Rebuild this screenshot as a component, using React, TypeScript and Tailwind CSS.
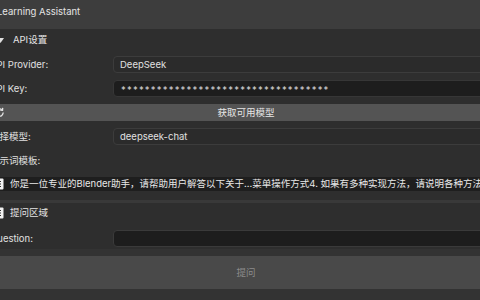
import React from "react";

const font = { fontFamily: 'Inter, "Noto Sans CJK SC", sans-serif' };

function DocIcon() {
  return (
    <svg width="11" height="12" viewBox="0 0 11 12" className="shrink-0">
      <rect x="0.5" y="0.5" width="10" height="11" rx="1" fill="#f2f2f2" />
      <rect x="2" y="3" width="6" height="1" fill="#2a2a2a" />
      <rect x="2" y="5.5" width="6" height="1" fill="#2a2a2a" />
      <rect x="2" y="8" width="6" height="1" fill="#2a2a2a" />
    </svg>
  );
}

function Row({ label, children }: { label: string; children: React.ReactNode }) {
  return (
    <div className="flex h-[17px] items-center">
      <div className="w-[123px] shrink-0 text-[#e0e0e0] whitespace-nowrap">{label}</div>
      {children}
    </div>
  );
}

export default function App() {
  return (
    <div
      className="w-[480px] h-[300px] overflow-hidden bg-[#2e2e2e] text-[9.5px] leading-[12px]"
      style={font}
    >
      <div className="-ml-[20px] w-[532px] flex flex-col">
        {/* Panel header */}
        <div className="h-[29px] bg-[#3d3d3d] pl-[17px] pt-[6px] text-[#e4e4e4] whitespace-nowrap">
          Learning Assistant
        </div>

        {/* Sub panel: API设置 */}
        <div className="flex h-[22px] items-center pl-[17px] text-[#e4e4e4]">
          <svg width="7" height="5" viewBox="0 0 7 5" className="mr-[9px]">
            <path d="M0 0 L7 0 L3.5 5 Z" fill="#e0e0e0" />
          </svg>
          API设置
        </div>

        <div className="flex flex-col gap-[7px] pl-[10px] pr-[6px] mt-[5px]">
          <Row label="API Provider:">
            <div className="flex-1 h-[17px] rounded-[4px] border border-[#3c3c3c] bg-[#2b2b2b] pl-[6px] flex items-center text-[#e0e0e0]">
              DeepSeek
            </div>
          </Row>
          <Row label="API Key:">
            <div className="flex-1 h-[17px] rounded-[4px] border border-[#363636] bg-[#1d1d1d] pl-[7px] flex items-center text-[#d4d4d4] tracking-[1.2px] pt-[3px]">
              ***********************************
            </div>
          </Row>
          <div className="-ml-[4px] h-[17px] rounded-[3px] bg-[#545454] relative flex items-center justify-center text-[#e6e6e6]">
            <svg width="11" height="11" viewBox="0 0 12 12" className="absolute left-[8px] top-[3px]" fill="none" stroke="#e6e6e6" strokeWidth="1.4">
              <path d="M10 6 A4 4 0 1 1 8.5 2.9" />
              <path d="M9.5 1 L9.3 3.6 L6.8 3.4" />
            </svg>
            获取可用模型
          </div>
          <Row label="选择模型:">
            <div className="flex-1 h-[17px] rounded-[4px] border border-[#3c3c3c] bg-[#2b2b2b] pl-[6px] flex items-center text-[#e0e0e0]">
              deepseek-chat
            </div>
          </Row>
          <Row label="提示词模板:">
            <div />
          </Row>
        </div>

        <div className="mt-[8px] h-[14px] bg-[#1e1e1e] flex items-center gap-[6px] pl-[13px] whitespace-nowrap text-[#e8e8e8]">
          <DocIcon />
          你是一位专业的Blender助手，请帮助用户解答以下关于...菜单操作方式4. 如果有多种实现方法，请说明各种方法
        </div>

        <div className="mt-[9px] h-[3px] bg-[#393939]" />

        {/* Sub panel: 提问区域 */}
        <div className="flex h-[20px] items-center gap-[6px] pl-[13px] text-[#e4e4e4]">
          <DocIcon />
          提问区域
        </div>

        <div className="pl-[10px] pr-[6px] mt-[7px]">
          <Row label="Question:">
            <div className="flex-1 h-[17px] rounded-[4px] border border-[#3a3a3a] bg-[#1d1d1d]" />
          </Row>
        </div>

        <div className="mt-[2px] h-[7px] bg-[#333333]" />
        <div className="h-[33px] bg-[#494949] flex items-center justify-center text-[#8c8c8c]">
          提问
        </div>
        <div className="h-[20px] bg-[#333333]" />
      </div>
    </div>
  );
}
